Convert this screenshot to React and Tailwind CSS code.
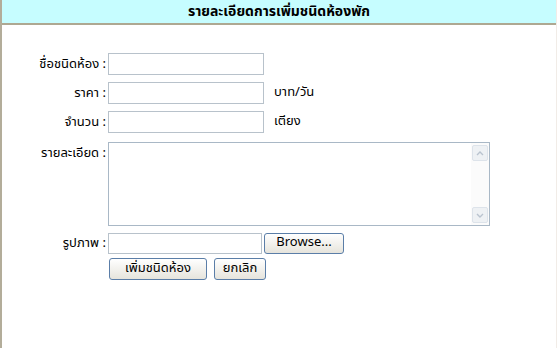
import React from 'react';

const font = { fontFamily: 'Tahoma, "Noto Sans Thai", "Noto Sans", "Liberation Sans", sans-serif' };

const Field = ({ label, children, top = 'items-center', className = '' }) => (
  <div className={`flex ${top} ${className}`}>
    <div className="w-[106px] shrink-0 pr-[2px] text-right text-[13px] text-black leading-[22px]">{label}</div>
    {children}
  </div>
);

const TextBox = ({ w = 'w-[156px]' }) => (
  <div className={`${w} h-[22px] border border-[#b8c2cb] bg-white`} />
);

const XpButton = ({ children, className = '' }) => (
  <div className={`flex items-center justify-center h-[21px] rounded-[3px] border border-[#5b7ea8] bg-gradient-to-b from-white to-[#e6e4dc] text-[13px] text-black ${className}`}>
    {children}
  </div>
);

const Arrow = ({ up }) => (
  <div className="h-[16px] w-[16px] flex items-center justify-center rounded-[2px] bg-[#eef1f4] border border-[#dde3ea]">
    <svg width="8" height="5" viewBox="0 0 8 5">
      <path d={up ? 'M1 4 L4 1 L7 4' : 'M1 1 L4 4 L7 1'} fill="none" stroke="#b9c3cf" strokeWidth="1.4" />
    </svg>
  </div>
);

export default function App() {
  return (
    <div className="w-[557px] h-[348px] bg-white border-l-2 border-[#b3ad9a] border-r border-r-[#f1ece7] overflow-hidden" style={font}>
      <div className="h-[25px] bg-[#c6fdff] border-b-2 border-[#aea892] flex items-center justify-center">
        <span className="text-[14px] font-bold text-black">รายละเอียดการเพิ่มชนิดห้องพัก</span>
      </div>

      <div className="pt-[28px] flex flex-col">
        <Field label="ชื่อชนิดห้อง :">
          <TextBox />
        </Field>
        <Field label="ราคา :" className="mt-[7px]">
          <TextBox />
          <span className="ml-[10px] text-[13px] text-black">บาท/วัน</span>
        </Field>
        <Field label="จำนวน :" className="mt-[7px]">
          <TextBox />
          <span className="ml-[10px] text-[13px] text-black">เตียง</span>
        </Field>
        <Field label="รายละเอียด :" top="items-start" className="mt-[9px]">
          <div className="w-[382px] h-[84px] border border-[#a9b8c6] bg-white flex justify-end">
            <div className="w-[18px] flex flex-col justify-between items-center py-[2px] bg-[#fbfbfb]">
              <Arrow up />
              <Arrow />
            </div>
          </div>
        </Field>
        <Field label="รูปภาพ :" className="mt-[6px]">
          <div className="w-[154px] h-[21px] border border-[#b8c2cb] bg-white" />
          <XpButton className="ml-[2px] w-[80px]">Browse...</XpButton>
        </Field>
        <div className="flex mt-[4px] pl-[107px] gap-[7px]">
          <XpButton className="w-[98px] h-[22px]">เพิ่มชนิดห้อง</XpButton>
          <XpButton className="w-[52px] h-[22px]">ยกเลิก</XpButton>
        </div>
      </div>
    </div>
  );
}
